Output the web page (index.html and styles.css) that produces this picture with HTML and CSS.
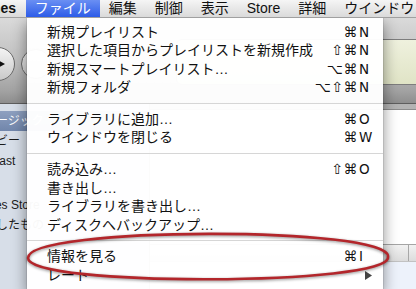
FILE: index.html
```html
<!DOCTYPE html>
<html lang="ja">
<head>
<meta charset="utf-8">
<link rel="stylesheet" href="styles.css">
</head>
<body>
<div class="menubar">
  <span class="mb-item app">iTunes</span>
  <span class="mb-item active">ファイル</span>
  <span class="mb-item">編集</span>
  <span class="mb-item">制御</span>
  <span class="mb-item">表示</span>
  <span class="mb-item">Store</span>
  <span class="mb-item">詳細</span>
  <span class="mb-item">ウインドウ</span>
  <span class="mb-item">ヘルプ</span>
</div>

<div class="window">
  <div class="toolbar">
    <div class="btn play">
      <svg width="12" height="12" viewBox="0 0 12 12"><path d="M2 1 L11 6 L2 11 Z" fill="#111"/></svg>
    </div>
    <div class="btn next"></div>
    <div class="lcd"></div>
  </div>
  <div class="main">
    <div class="sidebar">
      <div class="src sel">ミュージック</div>
      <div class="src">ムービー</div>
      <div class="src">Podcast</div>
      <div class="src-gap"></div>
      <div class="src">iTunes Store</div>
      <div class="src">購入したもの</div>
    </div>
    <div class="content">
      <div class="band"></div>
      <div class="browser"></div>
      <div class="thead"><span class="th first"></span><span class="th"></span></div>
      <div class="rows"></div>
    </div>
  </div>
</div>

<div class="menu">
  <div class="item"><span class="label">新規プレイリスト</span><span class="mods">⌘</span><span class="key">N</span></div>
  <div class="item"><span class="label">選択した項目からプレイリストを新規作成</span><span class="mods">⇧⌘</span><span class="key">N</span></div>
  <div class="item"><span class="label">新規スマートプレイリスト…</span><span class="mods">⌥⌘</span><span class="key">N</span></div>
  <div class="item"><span class="label">新規フォルダ</span><span class="mods">⌥⇧⌘</span><span class="key">N</span></div>
  <div class="sep"></div>
  <div class="item"><span class="label">ライブラリに追加…</span><span class="mods">⌘</span><span class="key">O</span></div>
  <div class="item"><span class="label">ウインドウを閉じる</span><span class="mods">⌘</span><span class="key">W</span></div>
  <div class="sep"></div>
  <div class="item"><span class="label">読み込み…</span><span class="mods">⇧⌘</span><span class="key">O</span></div>
  <div class="item"><span class="label">書き出し…</span><span class="mods"></span><span class="key"></span></div>
  <div class="item"><span class="label">ライブラリを書き出し…</span><span class="mods"></span><span class="key"></span></div>
  <div class="item"><span class="label">ディスクへバックアップ…</span><span class="mods"></span><span class="key"></span></div>
  <div class="sep"></div>
  <div class="item"><span class="label">情報を見る</span><span class="mods">⌘</span><span class="key">I</span></div>
  <div class="item"><span class="label">レート</span><span class="mods"></span><span class="key"><svg class="arrow" width="7" height="9" viewBox="0 0 7 9"><path d="M0 0 L7 4.5 L0 9 Z" fill="#444"/></svg></span></div>
</div>

<svg class="circle-mark" width="416" height="289" viewBox="0 0 416 289">
  <path d="M28 258 C 27 226, 392 226, 388 257 C 392 286, 27 287, 28 258 Z" fill="none" stroke="#b3262b" stroke-width="2.6"/>
</svg>
</body>
</html>
```

FILE: styles.css
```css
* { box-sizing: border-box; }

body {
  margin: 0;
  width: 416px;
  height: 289px;
  overflow: hidden;
  position: relative;
  background: #fff;
  font-family: "Liberation Sans", "Noto Sans CJK JP", sans-serif;
  color: #111;
}

/* ---------- menu bar ---------- */
.menubar {
  display: flex;
  height: 18px;
  white-space: nowrap;
  overflow: hidden;
  background: linear-gradient(#f5f5f5, #dadada);
  border-bottom: 1px solid #a0a0a0;
  font-size: 14px;
  line-height: 17px;
  position: relative;
  z-index: 3;
}

.mb-item {
  flex: none;
  padding: 0 9px;
  color: #111;
}

.mb-item.app {
  margin-left: -28px;
  padding: 0 9.7px 0 0;
  font-weight: bold;
}

.mb-item.active {
  color: #fff;
  background: linear-gradient(#6a8ff3, #2d5ce8);
}

/* ---------- iTunes window behind ---------- */
.window {
  display: flex;
  flex-direction: column;
  height: 271px;
}

.toolbar {
  display: flex;
  align-items: flex-start;
  height: 86px;
  flex: none;
  background: linear-gradient(#dadada, #bdbdbd 55%, #a3a3a3 85%, #8e8e8e);
  border-bottom: 1px solid #5e5e5e;
  overflow: hidden;
}

.btn {
  flex: none;
  border-radius: 50%;
  border: 1px solid #6a6a6a;
  background: linear-gradient(#f4f4f4, #c9c9c9);
  display: flex;
  align-items: center;
  justify-content: center;
}

.btn.play {
  width: 34px;
  height: 34px;
  margin: 29px 0 0 -19px;
}

.btn.play svg { margin-left: 3px; }

.btn.next {
  width: 30px;
  height: 30px;
  margin: 31px 0 0 6px;
}

.lcd {
  flex: none;
  margin: 21px -60px 0 auto;
  width: 300px;
  height: 46px;
  border: 1px solid #7d7d7d;
  border-radius: 6px;
  background: linear-gradient(#eff1de, #e0e4c6);
}

.main {
  display: flex;
  flex: 1;
  min-height: 0;
}

.sidebar {
  flex: none;
  width: 180px;
  margin-left: -30px;
  padding-top: 7px;
  background: #d7dee8;
  border-right: 1px solid #8a8a8a;
  font-size: 12px;
}

.src {
  height: 20px;
  line-height: 20px;
  padding-left: 2px;
  white-space: nowrap;
  color: #1a1a1a;
}

.src.sel {
  color: #fff;
  background: linear-gradient(#8ea0c0, #7186ab);
}

.src-gap { height: 24px; }

.content {
  flex: 1;
  display: flex;
  flex-direction: column;
  background: #fff;
}

.band {
  height: 6px;
  background: #b3b3b3;
  border-bottom: 1px solid #8c8c8c;
}

.browser {
  height: 134px;
  background: #fff;
}

.thead {
  display: flex;
  height: 18px;
  border-top: 1px solid #a5a5a5;
  border-bottom: 1px solid #c2c2c2;
  background: linear-gradient(#f2f2f2, #dcdcdc);
}

.th.first {
  width: 259px;
  border-right: 1px solid #a8a8a8;
}

.rows {
  flex: 1;
  background: #edf2fb;
}

/* ---------- pulled-down menu ---------- */
.menu {
  position: absolute;
  left: 27px;
  top: 18px;
  width: 356px;
  padding: 4.5px 0 6px;
  background: rgba(255, 255, 255, 0.97);
  box-shadow: 0 5px 14px rgba(0, 0, 0, 0.45), 0 0 0 1px rgba(0, 0, 0, 0.08);
  z-index: 2;
  font-size: 14px;
}

.item {
  display: flex;
  align-items: center;
  height: 18.6px;
  line-height: 18.6px;
  padding: 0 9px 0 20px;
  white-space: nowrap;
  color: #111;
}

.label { flex: 1; }

.mods {
  font-family: "DejaVu Sans", sans-serif;
  font-size: 14px;
  text-align: right;
  padding-right: 1px;
  letter-spacing: 0.5px;
}

.key {
  width: 15px;
  font-family: "DejaVu Sans", sans-serif;
  font-size: 13.5px;
  text-align: left;
  display: flex;
  align-items: center;
}

.arrow { margin-left: 6px; }

.sep {
  height: 13px;
  display: flex;
  align-items: center;
}

.sep::before {
  content: "";
  flex: 1;
  height: 1px;
  background: #d6d6d6;
}

/* ---------- red annotation ---------- */
.circle-mark {
  position: absolute;
  left: 0;
  top: 0;
  z-index: 4;
  pointer-events: none;
  filter: drop-shadow(0 1px 1.5px rgba(0, 0, 0, 0.45));
}
```
